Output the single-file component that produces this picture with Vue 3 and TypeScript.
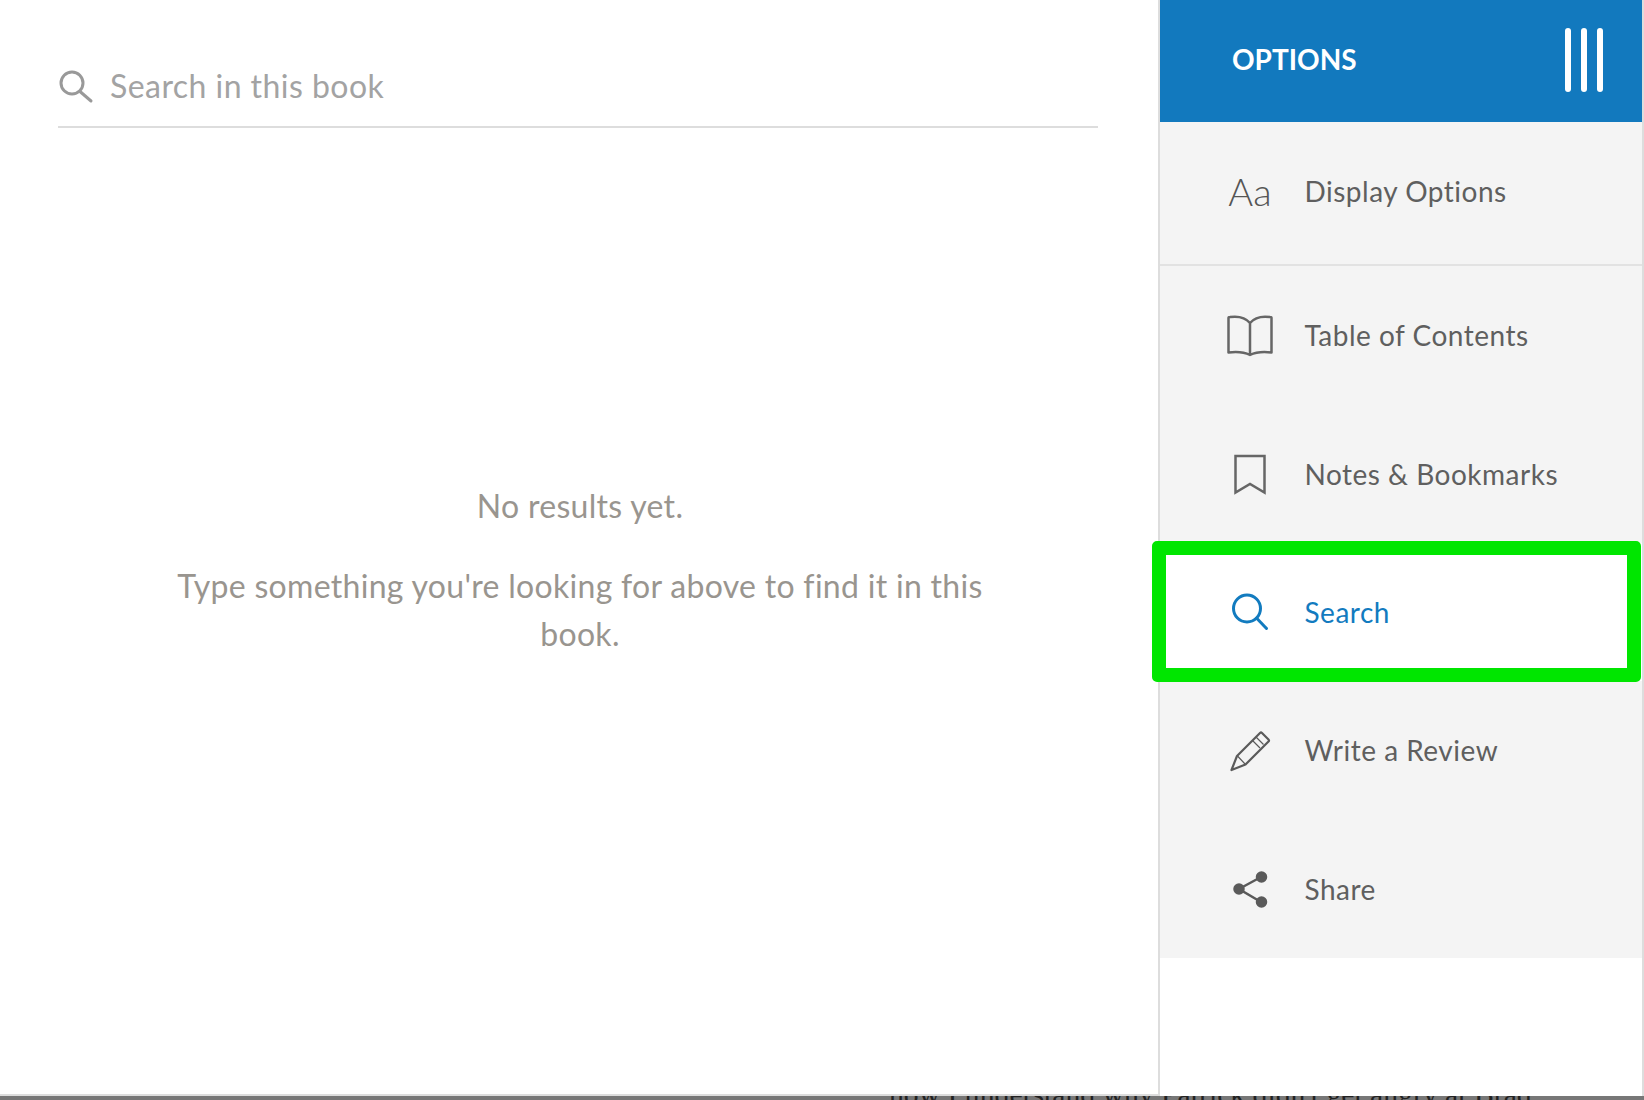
<script setup lang="ts">
const bars = [0, 1, 2]
</script>

<template>
  <div class="page">
    <div class="main">
      <section class="reader">
        <div class="searchbar">
          <svg class="search-icon" width="36" height="36" viewBox="0 0 36 36">
            <circle cx="14" cy="15" r="11" fill="none" stroke="#999" stroke-width="3" />
            <path d="M22 23.5 L33 33" stroke="#999" stroke-width="3" stroke-linecap="round" />
          </svg>
          <span class="placeholder">Search in this book</span>
        </div>
        <div class="empty">
          <p class="line-one">No results yet.</p>
          <p class="line-two">Type something you're looking for above to find it in this book.</p>
        </div>
      </section>
      <aside class="sidebar">
        <header class="head">
          <span class="head-title">OPTIONS</span>
          <span class="bars"><i v-for="b in bars" :key="b"></i></span>
        </header>
        <ul class="menu">
          <li class="item first">
            <span class="icon aa">Aa</span>
            <span>Display Options</span>
          </li>
          <li class="item">
            <svg class="icon" width="60" height="60" viewBox="0 0 60 60" fill="none" stroke="#666" stroke-width="2.5" stroke-linejoin="round">
              <path d="M8.5 13 Q8.5 12 10 12 C17 11 25 12 30 18 C35 12 43 11 50 12 Q51.5 12 51.5 13 V47.5 C44 46.5 36 47 30 50 C24 47 16 46.5 8.5 47.5 Z M30 18 V50" />
            </svg>
            <span>Table of Contents</span>
          </li>
          <li class="item">
            <svg class="icon" width="60" height="60" viewBox="0 0 60 60" fill="none" stroke="#666" stroke-width="2.5">
              <path d="M15.5 12 H44.5 V48.5 L30 40 L15.5 48.5 Z" />
            </svg>
            <span>Notes &amp; Bookmarks</span>
          </li>
          <li class="item active">
            <svg class="icon" width="60" height="60" viewBox="0 0 60 60" fill="none" stroke="#127bbf" stroke-width="3">
              <circle cx="27" cy="26.5" r="13.5" />
              <path d="M36.5 36 L46.5 46.5" stroke-linecap="round" />
            </svg>
            <span>Search</span>
            <div class="highlight"></div>
          </li>
          <li class="item">
            <svg class="icon" width="60" height="60" viewBox="0 0 60 60" fill="none" stroke="#5a5a5a" stroke-width="2.2" stroke-linejoin="round">
              <path d="M11.5 50 L17 36 L40 13 Q41 12 42 13 L48.5 19.5 Q49.5 20.5 48.5 21.5 L25.5 44.5 Z" />
              <path d="M17.5 36 L25 44 M32.5 20.5 L40 28 M36 17 L43.5 24.5" stroke-width="1.2" />
            </svg>
            <span>Write a Review</span>
          </li>
          <li class="item">
            <svg class="icon" width="60" height="60" viewBox="0 0 60 60" fill="#5a5a5a" stroke="#5a5a5a" stroke-width="2.5">
              <path d="M41 18 L19 30 L41 43" fill="none" />
              <circle cx="19" cy="30" r="4.5" />
              <circle cx="41.5" cy="18" r="4.5" />
              <circle cx="41.5" cy="43" r="4.5" />
            </svg>
            <span>Share</span>
          </li>
        </ul>
      </aside>
    </div>
    <div class="strip">
      <p>how I understand why Patrick didn't get angry at Brad</p>
    </div>
  </div>
</template>

<style scoped>
.page {
  width: 1644px;
  height: 1100px;
  display: flex;
  flex-direction: column;
  overflow: hidden;
  background: #fff;
  font-family: Lato, "Liberation Sans", sans-serif;
}
.main {
  height: 1096px;
  flex: none;
  display: flex;
}
.reader {
  flex: 1;
  min-width: 0;
  box-sizing: border-box;
  border-bottom: 2px solid #ddd;
  padding: 0 60px 0 58px;
}
.searchbar {
  height: 128px;
  box-sizing: border-box;
  border-bottom: 2px solid #ddd;
  display: flex;
  align-items: flex-start;
  padding-top: 68px;
}
.search-icon {
  flex: none;
}
.placeholder {
  margin-left: 16px;
  font-size: 32px;
  letter-spacing: 0.45px;
  line-height: 36px;
  color: #a3a3a3;
}
.empty {
  padding: 354px 106px 0 110px;
  text-align: center;
  color: #99958f;
  font-size: 32px;
  letter-spacing: 0.3px;
  line-height: 48px;
}
.empty p {
  margin: 0;
}
.line-one {
  margin-bottom: 32px !important;
}
.sidebar {
  width: 486px;
  flex: none;
  box-sizing: border-box;
  border-left: 2px solid #ddd;
  border-right: 2px solid #ddd;
  background: #fff;
}
.head {
  height: 122px;
  box-sizing: border-box;
  background: #1279be;
  color: #fff;
  display: flex;
  align-items: center;
  justify-content: space-between;
  padding: 0 39px 2px 72px;
}
.head-title {
  font-size: 28px;
  font-weight: 700;
  padding-bottom: 2px;
}
.bars {
  display: flex;
  gap: 10px;
}
.bars i {
  display: block;
  width: 6px;
  height: 64px;
  border-radius: 3px;
  background: #fff;
}
.menu {
  list-style: none;
  margin: 0;
  padding: 0;
  background: #f4f4f4;
}
.item {
  position: relative;
  display: flex;
  align-items: center;
  height: 138.4px;
  padding-left: 60px;
  font-size: 28px;
  letter-spacing: 0.5px;
  color: #5f5f5f;
}
.first {
  height: 144px;
  box-sizing: border-box;
  border-bottom: 2px solid #e2e2e2;
  padding-bottom: 4px;
}
.icon {
  flex: none;
  width: 60px;
  height: 60px;
  margin-right: 24.5px;
}
.aa {
  display: flex;
  align-items: center;
  justify-content: center;
  font-size: 38px;
  font-weight: 300;
  letter-spacing: 0;
  color: #555;
}
.active {
  background: #fff;
  color: #127bbf;
}
.highlight {
  position: absolute;
  top: -2px;
  right: 1px;
  bottom: -1px;
  left: -8px;
  box-sizing: border-box;
  border: 14px solid #00e600;
  border-radius: 5px;
}
.strip {
  height: 4px;
  flex: none;
  overflow: hidden;
  background: #777;
}
.strip p {
  margin: -20px 0 0 889px;
  font-family: "Liberation Serif", serif;
  font-size: 29.7px;
  line-height: 36px;
  color: #222;
  white-space: nowrap;
}
</style>

<style>
html,
body {
  margin: 0;
  overflow: hidden;
}
</style>
